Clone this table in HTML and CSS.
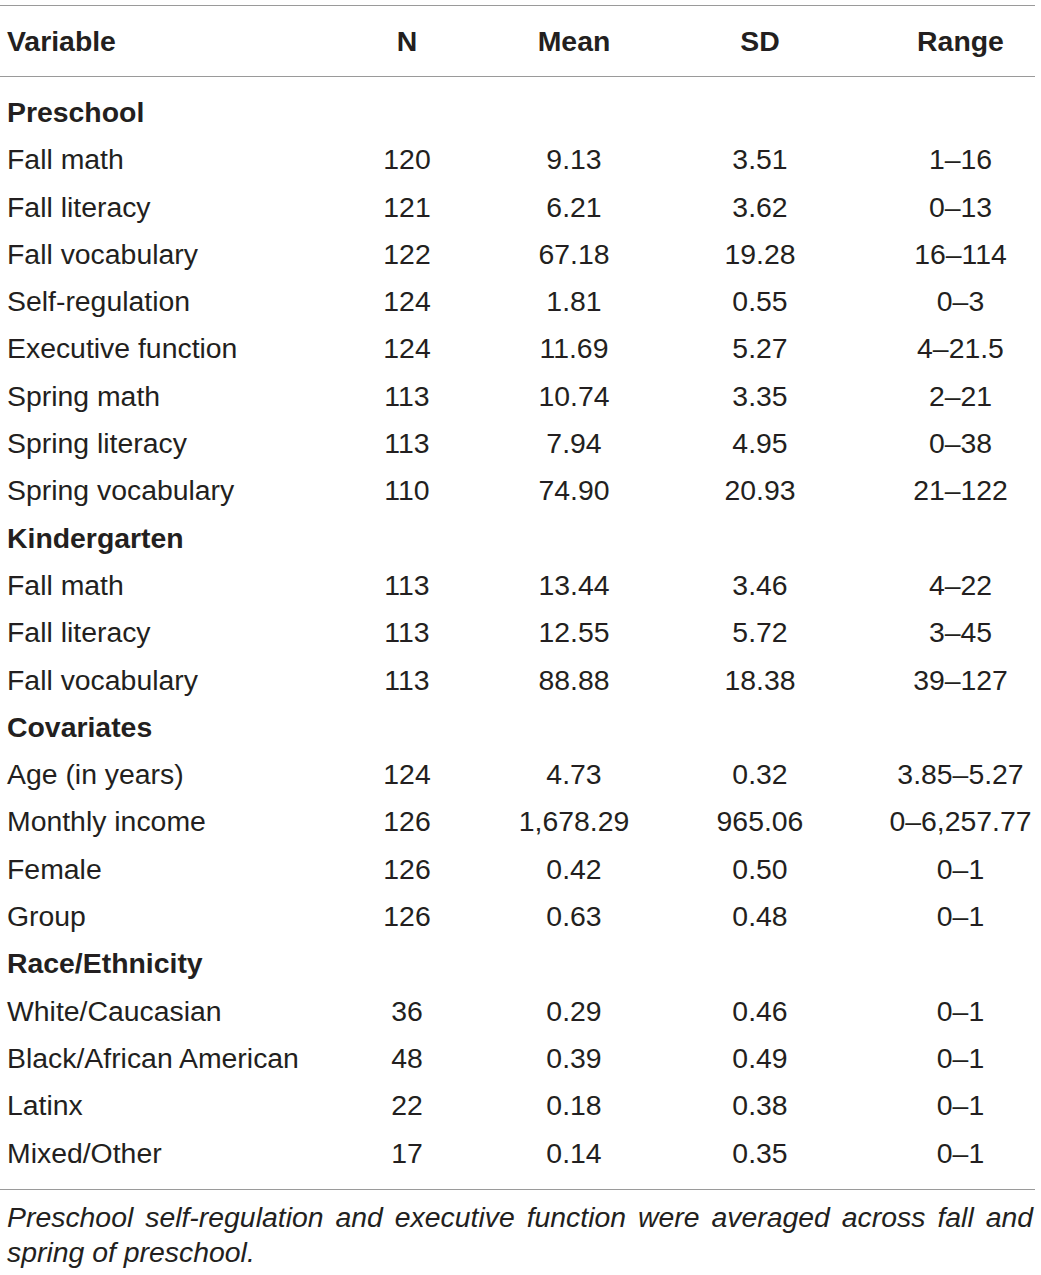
FILE: index.html
```html
<!DOCTYPE html>
<html>
<head>
<meta charset="utf-8">
<link rel="stylesheet" href="styles.css">
</head>
<body>
<div class="wrap">
<table class="stats">
<colgroup>
<col class="c-var"><col class="c-n"><col class="c-mean"><col class="c-sd"><col class="c-range">
</colgroup>
<thead>
<tr><th class="lbl">Variable</th><th>N</th><th>Mean</th><th>SD</th><th>Range</th></tr>
</thead>
<tbody>
<tr class="sec first"><td class="lbl" colspan="5">Preschool</td></tr>
<tr><td class="lbl">Fall math</td><td>120</td><td>9.13</td><td>3.51</td><td>1–16</td></tr>
<tr><td class="lbl">Fall literacy</td><td>121</td><td>6.21</td><td>3.62</td><td>0–13</td></tr>
<tr><td class="lbl">Fall vocabulary</td><td>122</td><td>67.18</td><td>19.28</td><td>16–114</td></tr>
<tr><td class="lbl">Self-regulation</td><td>124</td><td>1.81</td><td>0.55</td><td>0–3</td></tr>
<tr><td class="lbl">Executive function</td><td>124</td><td>11.69</td><td>5.27</td><td>4–21.5</td></tr>
<tr><td class="lbl">Spring math</td><td>113</td><td>10.74</td><td>3.35</td><td>2–21</td></tr>
<tr><td class="lbl">Spring literacy</td><td>113</td><td>7.94</td><td>4.95</td><td>0–38</td></tr>
<tr><td class="lbl">Spring vocabulary</td><td>110</td><td>74.90</td><td>20.93</td><td>21–122</td></tr>
<tr class="sec"><td class="lbl" colspan="5">Kindergarten</td></tr>
<tr><td class="lbl">Fall math</td><td>113</td><td>13.44</td><td>3.46</td><td>4–22</td></tr>
<tr><td class="lbl">Fall literacy</td><td>113</td><td>12.55</td><td>5.72</td><td>3–45</td></tr>
<tr><td class="lbl">Fall vocabulary</td><td>113</td><td>88.88</td><td>18.38</td><td>39–127</td></tr>
<tr class="sec"><td class="lbl" colspan="5">Covariates</td></tr>
<tr><td class="lbl">Age (in years)</td><td>124</td><td>4.73</td><td>0.32</td><td>3.85–5.27</td></tr>
<tr><td class="lbl">Monthly income</td><td>126</td><td>1,678.29</td><td>965.06</td><td>0–6,257.77</td></tr>
<tr><td class="lbl">Female</td><td>126</td><td>0.42</td><td>0.50</td><td>0–1</td></tr>
<tr><td class="lbl">Group</td><td>126</td><td>0.63</td><td>0.48</td><td>0–1</td></tr>
<tr class="sec"><td class="lbl" colspan="5">Race/Ethnicity</td></tr>
<tr><td class="lbl">White/Caucasian</td><td>36</td><td>0.29</td><td>0.46</td><td>0–1</td></tr>
<tr><td class="lbl">Black/African American</td><td>48</td><td>0.39</td><td>0.49</td><td>0–1</td></tr>
<tr><td class="lbl">Latinx</td><td>22</td><td>0.18</td><td>0.38</td><td>0–1</td></tr>
<tr class="last"><td class="lbl">Mixed/Other</td><td>17</td><td>0.14</td><td>0.35</td><td>0–1</td></tr>
</tbody>
</table>
<p class="note">Preschool self-regulation and executive function were averaged across fall and spring of preschool.</p>
</div>
</body>
</html>
```

FILE: styles.css
```css
html, body {
  margin: 0;
  padding: 0;
  background: #ffffff;
}
body {
  font-family: "Liberation Sans", Arial, Helvetica, sans-serif;
  color: #231f20;
  font-size: 28.4px;
}
.wrap {
  width: 1035px;
  padding-top: 5px;
}
.stats {
  width: 1035px;
  border-collapse: collapse;
  table-layout: fixed;
}
.c-var { width: 300px; }
.c-n { width: 214px; }
.c-mean { width: 120px; }
.c-sd { width: 252px; }
.c-range { width: 149px; }

.stats thead tr {
  border-top: 1px solid #9a9a9a;
  border-bottom: 1px solid #9a9a9a;
}
.stats th {
  height: 70px;
  padding: 0;
  font-weight: bold;
  text-align: center;
  white-space: nowrap;
  vertical-align: middle;
}
.stats td {
  height: 47.3px;
  padding: 0;
  line-height: 47.3px;
  text-align: center;
  white-space: nowrap;
  vertical-align: middle;
}
.stats .lbl {
  text-align: left;
  padding-left: 7px;
}
.stats .sec td {
  font-weight: bold;
}
.stats .first td {
  padding-top: 12px;
}
.stats .last {
  border-bottom: 1px solid #9a9a9a;
}
.stats .last td {
  padding-bottom: 12px;
}
.note {
  margin: 10px 0 0 0;
  padding-left: 7px;
  width: 1026px;
  font-style: italic;
  line-height: 35px;
  text-align: justify;
}
```
